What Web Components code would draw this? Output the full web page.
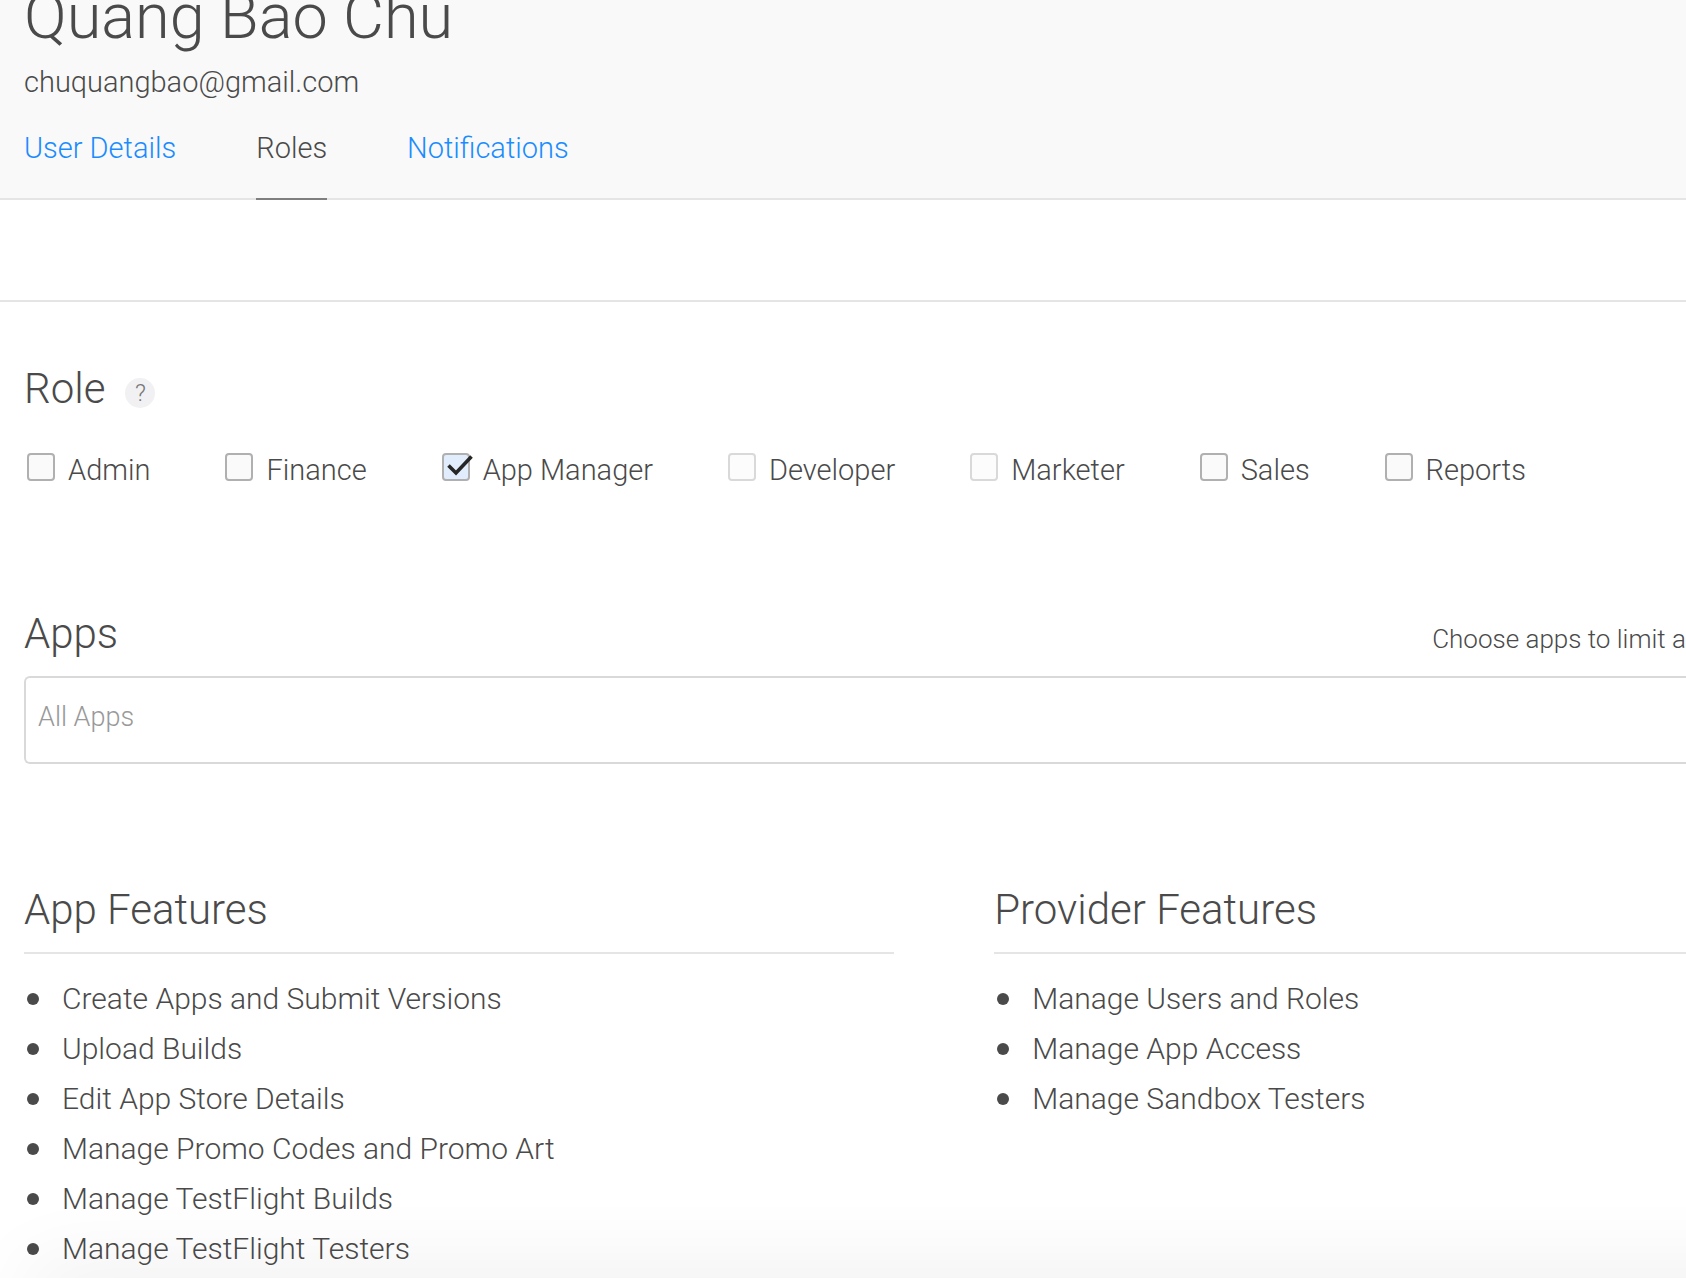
<!DOCTYPE html>
<html lang="en">
<head>
<meta charset="utf-8">
<title>Users and Roles</title>
<style>
  body { margin: 0; background: #fff; color: #4a4a4a; font-family: Roboto, "Liberation Sans", sans-serif; font-weight: 300; font-size: 30px; line-height: 50px; overflow: hidden; height: 100vh; }
</style>
</head>
<body>
<user-roles-page></user-roles-page>

<script>
class BaseElement extends HTMLElement {
  constructor() {
    super();
    this.attachShadow({ mode: "open" }).innerHTML = this.template();
  }
}

class UserHeader extends BaseElement {
  template() {
    return `<style>
      :host { display: block; background: #f9f9f9; border-bottom: 2px solid #e5e5e5; padding: 0 24px; font-size: 29px; }
      h1 { margin: -13px 0 0; font-size: 63px; line-height: 60px; font-weight: 300; white-space: nowrap; }
      p { margin: 10px 0 0; line-height: 50px; }
      nav { display: flex; gap: 80px; margin: 16px 0 -2px; }
    </style>
    <h1><slot name="name"></slot></h1>
    <p><slot name="email"></slot></p>
    <nav><slot></slot></nav>`;
  }
}
customElements.define("user-header", UserHeader);

class NavTab extends BaseElement {
  template() {
    return `<style>
      :host { display: block; }
      a { display: block; color: #1a8cff; text-decoration: none; line-height: 50px; padding-bottom: 25px; border-bottom: 2px solid transparent; }
      :host([current]) a { color: inherit; border-color: #7f7f7f; }
    </style>
    <a href="#"><slot></slot></a>`;
  }
}
customElements.define("nav-tab", NavTab);

class HelpButton extends BaseElement {
  template() {
    return `<style>
      :host { display: block; }
      button { display: block; width: 30px; height: 30px; padding: 0; border: 0; border-radius: 50%; background: #f1f1f4; color: #777; font: inherit; font-size: 24px; line-height: 30px; }
    </style>
    <button type="button">?</button>`;
  }
}
customElements.define("help-button", HelpButton);

class SectionTitle extends BaseElement {
  template() {
    return `<style>
      :host { display: flex; align-items: center; gap: 20px; }
      h2 { margin: 0; font-size: 42px; line-height: 50px; font-weight: 300; white-space: nowrap; }
      ::slotted(help-button) { margin-top: 8px; }
    </style>
    <h2><slot></slot></h2><slot name="extra"></slot>`;
  }
}
customElements.define("section-title", SectionTitle);

class RoleOption extends BaseElement {
  template() {
    return `<style>
      :host { display: block; font-size: 29px; }
      label { display: flex; align-items: flex-start; gap: 13px; white-space: nowrap; line-height: 34px; }
      .box { position: relative; display: block; width: 28px; height: 28px; }
      input { appearance: none; display: block; box-sizing: border-box; width: 28px; height: 28px; margin: 0; border: 2px solid #b0b0b0; border-radius: 4px; background: #fafafa; }
      input:disabled { border-color: #d9d9d9; background: #fcfcfc; }
      input:checked { background: #e1edfc; }
      svg { position: absolute; left: 0; top: 0; overflow: visible; display: none; pointer-events: none; }
      input:checked + svg { display: block; }
    </style>
    <label><span class="box"><input type="checkbox"><svg width="28" height="28" viewBox="0 0 28 28" fill="none" stroke="#262626" stroke-width="3.6"><path d="M6.5 12.5 L14 20 L29.5 3.5"/></svg></span><slot></slot></label>`;
  }
  connectedCallback() {
    const input = this.shadowRoot.querySelector("input");
    input.checked = this.hasAttribute("checked");
    input.disabled = this.hasAttribute("disabled");
  }
}
customElements.define("role-option", RoleOption);

class AppPicker extends BaseElement {
  template() {
    return `<style>
      :host { display: block; }
      .head { display: flex; justify-content: space-between; align-items: baseline; }
      h2 { margin: 0; font-size: 42px; line-height: 50px; font-weight: 300; }
      .note { font-size: 26px; line-height: 50px; white-space: nowrap; }
      input { display: block; box-sizing: border-box; width: 100%; height: 88px; margin: 12px 0 0; padding: 0 12px 6px; border: 2px solid #d9d9d9; border-right: 0; border-radius: 6px 0 0 6px; background: #fff; color: inherit; font: inherit; font-size: 27px; }
      input::placeholder { color: #999; opacity: 1; }
    </style>
    <div class="head"><h2><label for="apps">Apps</label></h2><span class="note"><slot></slot></span></div>
    <input id="apps" type="text" placeholder="All Apps">`;
  }
}
customElements.define("app-picker", AppPicker);

class FeatureList extends BaseElement {
  template() {
    return `<style>
      :host { display: block; }
      h2 { margin: 0; padding-bottom: 17px; border-bottom: 2px solid #e5e5e5; font-size: 42px; line-height: 50px; font-weight: 300; }
      ul { margin: 20px 0 0; padding: 0; list-style: none; }
      li { display: flex; align-items: center; gap: 23px; padding-left: 3px; line-height: 50px; white-space: nowrap; }
      li::before { content: ""; width: 12px; height: 12px; border-radius: 50%; background: #4a4a4a; }
    </style>
    <h2><slot></slot></h2><ul></ul>`;
  }
  connectedCallback() {
    const list = this.shadowRoot.querySelector("ul");
    list.replaceChildren(...this.getAttribute("items").split("|").map(text => {
      const item = document.createElement("li");
      item.textContent = text;
      return item;
    }));
  }
}
customElements.define("feature-list", FeatureList);

class UserRolesPage extends BaseElement {
  template() {
    return `<style>
      :host { display: block; }
      .bar { height: 100px; border-bottom: 2px solid #e5e5e5; }
      main { padding: 62px 0 0 24px; }
      .roles { display: flex; gap: 75px; padding: 39px 0 0 3px; }
      app-picker { margin-top: 122px; }
      .features { display: grid; grid-template-columns: 39fr 31fr; gap: 100px; margin-top: 121px; }
      .edge { position: fixed; left: 40px; right: -100px; bottom: -40px; height: 40px; box-shadow: 0 0 80px 10px rgba(0,0,0,.07); pointer-events: none; }
    </style>
    <user-header>
      <span slot="name">Quang Bao Chu</span>
      <span slot="email">chuquangbao@gmail.com</span>
      <nav-tab>User Details</nav-tab><nav-tab current>Roles</nav-tab><nav-tab>Notifications</nav-tab>
    </user-header>
    <div class="bar"></div>
    <main>
      <section-title>Role<help-button slot="extra"></help-button></section-title>
      <div class="roles">
        <role-option>Admin</role-option><role-option>Finance</role-option><role-option checked>App Manager</role-option><role-option disabled>Developer</role-option><role-option disabled>Marketer</role-option><role-option>Sales</role-option><role-option>Reports</role-option>
      </div>
      <app-picker>Choose apps to limit a</app-picker>
      <div class="features">
        <feature-list items="Create Apps and Submit Versions|Upload Builds|Edit App Store Details|Manage Promo Codes and Promo Art|Manage TestFlight Builds|Manage TestFlight Testers">App Features</feature-list>
        <feature-list items="Manage Users and Roles|Manage App Access|Manage Sandbox Testers">Provider Features</feature-list>
      </div>
    </main>
    <div class="edge"></div>`;
  }
}
customElements.define("user-roles-page", UserRolesPage);
</script>
</body>
</html>
